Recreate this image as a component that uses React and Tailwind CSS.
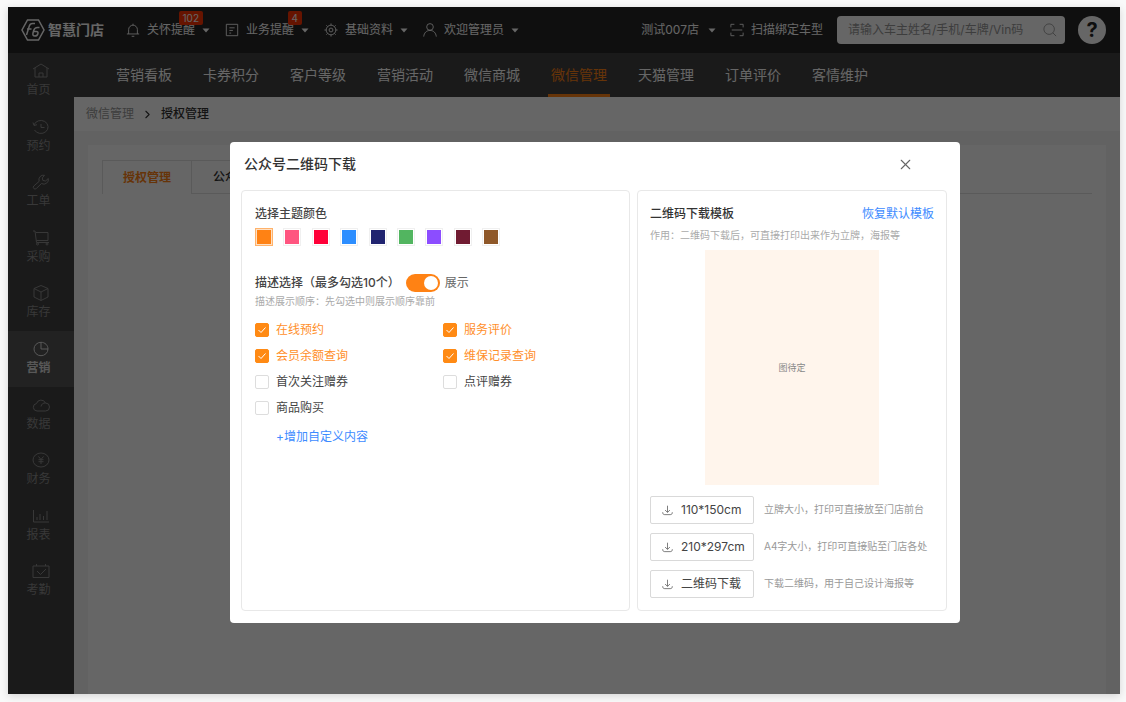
import React, { useState } from 'react';
import { ChevronRight, X } from 'lucide-react';

const ICONS = {
    bell: <><path d="M3 12.500V7.500a5 5 0 0 1 10 0v5M1 12.500h14M8 2.500V.8M6.500 15.200h3" /></>,
    doc: <><path d="M1.500 1.500h13v13h-13zM5 5.500h6M5 8.500h4M5 11.500h2" /></>,
    gear: <><circle cx="8" cy="8" r="5.500" /><circle cx="8" cy="8" r="2.200" /><path d="M8 .5v2M8 13.500v2M.5 8h2M13.500 8h2M2.700 2.700l1.400 1.400M11.900 11.900l1.400 1.400M2.700 13.300l1.400-1.400M11.900 4.100l1.400-1.400" /></>,
    user: <><circle cx="8" cy="4.500" r="3.800" /><path d="M.8 15.500c.5-4.500 3.400-7 7.200-7s6.700 2.500 7.200 7" /></>,
    scan: <><path d="M1 5V1.500h4M11 1.500h4V5M15 11v3.500h-4M5 14.500H1V11M2 8h12" /></>,
    search: <><circle cx="7" cy="7" r="6" /><path d="M11.200 11.200 15 15" /></>,
    download: <><path d="M8 1v9.500M4.500 7.300 8 10.800l3.500-3.500M1 10.500c0 2.500 1 3.500 3 3.500h8c2 0 3-1 3-3.500" /></>,
    home: <><path d="M1 7 9 2l8 5M3 6v9h12V6M7 15v-4h4v4" /></>,
    clock: <><path d="M2 7a7.200 6.500 0 1 1 .5 5M1 4.500 2 7.500l3-.8M9 6v3.500h3.500" /></>,
    wrench: <><path d="M12.500 2.300a4.500 4.500 0 0 0-5.300 6L1.800 13a1.700 1.700 0 0 0 2.500 2.500l5.200-5a4.600 4.600 0 0 0 6.800-5L13.500 8l-2.700-.6-.5-2.500z" /></>,
    cart: <><path d="M1 2h2l1.500 11.500H17M4 3.500h12v8H4.500" /><circle cx="5.500" cy="15" r="1" /><circle cx="15" cy="15" r="1" /></>,
    box: <><path d="M9 1.500 16 4.500v8.500l-7 3.500L2 13V4.500zM2 4.500l7 3.500 7-3.500M9 8v8.500" /></>,
    pie: <><path d="M16 9a7 6.700 0 1 1-7-6.700V9z M9 2.300c4 0 7 3 7 6.700" /></>,
    cloud: <><path d="M5 15a4 3.800 0 0 1-.5-7.500 4.800 4.800 0 0 1 9-.5A4 4 0 0 1 13.500 15zM9 10.500a4 4 0 0 1 4.500-3.500" /></>,
    yuan: <><ellipse cx="9" cy="9" rx="8" ry="7" /><path d="m6.500 5.500 2.500 3 2.500-3M6.500 8.700h5M6.500 10.700h5M9 8.500V13" /></>,
    chart: <><path d="M1.500 3v12H17M5 13v-3M8 13V7M11.500 13V9M15 13V4" /></>,
    calendar: <><path d="M1 4h16v11.500H1zM4.500 2v2M13.500 2v2M5 9l3.500 3.500L14 7" /></>,
};

const Icon = ({ name, size = 16, box = 16 }) => (
    <svg width={size} height={size} viewBox={`0 0 ${box} ${box}`} fill="none" stroke="currentColor" className="shrink-0" aria-hidden="true">
        {ICONS[name]}
    </svg>
);

const Caret = () => (
    <svg width="8" height="5" viewBox="0 0 8 5" className="shrink-0" aria-hidden="true">
        <path d="M.5.5h7L4 4.500z" fill="currentColor" />
    </svg>
);

const topMenu = [
    { icon: 'bell', label: '关怀提醒', badge: '102' },
    { icon: 'doc', label: '业务提醒', badge: '4' },
    { icon: 'gear', label: '基础资料' },
    { icon: 'user', label: '欢迎管理员' },
];

const sideMenu = [
    { icon: 'home', label: '首页' },
    { icon: 'clock', label: '预约' },
    { icon: 'wrench', label: '工单' },
    { icon: 'cart', label: '采购' },
    { icon: 'box', label: '库存' },
    { icon: 'pie', label: '营销' },
    { icon: 'cloud', label: '数据' },
    { icon: 'yuan', label: '财务' },
    { icon: 'chart', label: '报表' },
    { icon: 'calendar', label: '考勤' },
];

const subNav = ['营销看板', '卡券积分', '客户等级', '营销活动', '微信商城', '微信管理', '天猫管理', '订单评价', '客情维护'];

const themes = [
    { name: '橙色', bg: 'bg-[#ff8214]' },
    { name: '粉色', bg: 'bg-[#ff5580]' },
    { name: '红色', bg: 'bg-[#ff0038]' },
    { name: '蓝色', bg: 'bg-[#2d8eff]' },
    { name: '深蓝', bg: 'bg-[#212470]' },
    { name: '绿色', bg: 'bg-[#52b560]' },
    { name: '紫色', bg: 'bg-[#8c4dff]' },
    { name: '酒红', bg: 'bg-[#701b32]' },
    { name: '棕色', bg: 'bg-[#8f5829]' },
];

const options = ['在线预约', '服务评价', '会员余额查询', '维保记录查询', '首次关注赠券', '点评赠券', '商品购买'];

const downloads = [
    { label: '110*150cm', note: '立牌大小，打印可直接放至门店前台' },
    { label: '210*297cm', note: 'A4字大小，打印可直接贴至门店各处' },
    { label: '二维码下载', note: '下载二维码，用于自己设计海报等' },
];

const Header = () => (
    <header className="flex h-[46px] items-center bg-[#272727] pl-[13px] pr-[14px] text-xs text-white">
        <div className="mr-[22px] flex items-center gap-[3px]">
            <svg width="24" height="24" viewBox="0 0 24 24" fill="none" stroke="currentColor" strokeWidth="1.500" aria-hidden="true">
                <path d="M6.500 2h11L23 12l-5.500 10h-11L1 12z" />
                <path d="M14 5.500h-2.500c-1.800 0-2.700.8-3.200 2.500L5.500 17M6 11h4.500M18.500 9.500h-2c-2 0-3.200 1-3.800 3l-.7 2.500c-.5 2 .2 3 1.800 3 1.700 0 2.700-.8 3.100-2.300.4-1.500-.2-2.200-1.700-2.200h-2.500" />
            </svg>
            <span className="text-sm font-bold">智慧门店</span>
        </div>
        <nav className="flex items-center gap-[15px]">
            {topMenu.map(item => (
                <button key={item.label} type="button" className="flex items-center gap-[7px]">
                    <Icon name={item.icon} size={14} />
                    <span className="relative whitespace-nowrap">
                        {item.label}
                        {item.badge && (
                            <span className="absolute -right-2 -top-[11px] rounded-xs bg-[#ff3300] px-1 text-[10px] leading-[14px]">{item.badge}</span>
                        )}
                    </span>
                    <Caret />
                </button>
            ))}
        </nav>
        <div className="ml-auto flex items-center">
            <button type="button" className="mr-[14px] flex items-center gap-[9px] whitespace-nowrap">测试007店 <Caret /></button>
            <button type="button" className="mr-[14px] flex items-center gap-[7px] whitespace-nowrap"><Icon name="scan" size={14} />扫描绑定车型</button>
            <label className="mr-[13px] flex h-7 w-[228px] items-center rounded-sm bg-white pl-[11px] pr-2 text-[#999]">
                <input aria-label="搜索" placeholder="请输入车主姓名/手机/车牌/Vin码" className="min-w-0 flex-1 outline-none placeholder:text-[#999]" />
                <Icon name="search" size={14} />
            </label>
            <button type="button" aria-label="帮助" className="flex size-7 items-center justify-center rounded-full bg-white text-xl font-bold text-[#272727]">?</button>
        </div>
    </header>
);

const Sidebar = () => (
    <aside className="w-[66px] shrink-0 bg-[#424242] text-xs text-[#8c8c8c]">
        <nav className="flex h-[556px] flex-col">
            {sideMenu.map(item => (
                <a key={item.label} href="#" className={`flex flex-1 flex-col items-center pt-[9px] ${item.label === '营销' ? 'bg-[#555] font-bold text-[#ddd]' : ''}`}>
                    <Icon name={item.icon} size={18} box={18} />
                    <span className="pr-[5px] leading-5">{item.label}</span>
                </a>
            ))}
        </nav>
    </aside>
);

const ThemePanel = () => {
    const [theme, setTheme] = useState('橙色');
    const [show, setShow] = useState(true);
    const [checked, setChecked] = useState(options.slice(0, 4));

    const toggle = (name) => {
        setChecked(checked.includes(name) ? checked.filter(c => c !== name) : [...checked, name]);
    };

    return (
        <section className="flex-1 rounded-sm border border-[#e8e8e8] px-[13px] pt-[13px] text-xs text-[#444]">
            <h3 className="font-medium leading-5">选择主题颜色</h3>
            <div className="mt-1 flex w-[245px] justify-between">
                {themes.map(t => (
                    <button
                        key={t.name}
                        type="button"
                        aria-label={t.name}
                        onClick={() => setTheme(t.name)}
                        className={`size-[18px] border p-px ${theme === t.name ? 'border-[#ffb26b] bg-[#ffe0c2]' : 'border-[#f0f0f0]'}`}
                    >
                        <span className={`block size-full ${t.bg}`} />
                    </button>
                ))}
            </div>
            <div className="mt-[27px] flex h-5 items-center gap-1.5">
                <h3 className="font-medium">描述选择（最多勾选10个）</h3>
                <label className="flex items-center gap-[5px] text-[#666]">
                    <input type="checkbox" checked={show} onChange={() => setShow(!show)} className="peer sr-only" />
                    <span className="flex h-[18px] w-[34px] justify-start rounded-full bg-[#ccc] p-[2px] peer-checked:justify-end peer-checked:bg-[#ff8214]">
                        <span className="size-[14px] rounded-full bg-white" />
                    </span>
                    展示
                </label>
            </div>
            <p className="text-[10px] leading-4 text-[#aaa]">描述展示顺序：先勾选中则展示顺序靠前</p>
            <div className="mt-2 grid grid-cols-[188px_1fr]">
                {options.map(name => (
                    <label key={name} className={`flex h-[26px] items-center gap-[7px] ${checked.includes(name) ? 'text-[#ff8f2b]' : ''}`}>
                        <span className="grid size-[14px] place-items-center">
                            <input
                                type="checkbox"
                                checked={checked.includes(name)}
                                onChange={() => toggle(name)}
                                className="col-start-1 row-start-1 size-[14px] appearance-none rounded-xs border border-[#ddd] checked:border-[#ff8a14] checked:bg-[#ff8a14]"
                            />
                            <svg width="10" height="10" viewBox="0 0 10 10" fill="none" stroke="#fff" className="pointer-events-none col-start-1 row-start-1" aria-hidden="true">
                                <path d="M1.500 5 4 7.500 8.500 2.500" />
                            </svg>
                        </span>
                        {name}
                    </label>
                ))}
            </div>
            <button type="button" className="ml-[21px] mt-1.5 leading-5 text-[#3d8bff]">+增加自定义内容</button>
        </section>
    );
};

const TemplatePanel = () => (
    <section className="w-[310px] shrink-0 rounded-sm border border-[#e8e8e8] px-3 pb-3 pt-[13px] text-xs">
        <div className="flex justify-between leading-5">
            <h3 className="font-medium text-[#333]">二维码下载模板</h3>
            <button type="button" className="text-[#3d8bff]">恢复默认模板</button>
        </div>
        <p className="mt-[3px] text-[10px] leading-4 text-[#aaa]">作用：二维码下载后，可直接打印出来作为立牌，海报等</p>
        <div className="mx-auto mt-[7px] flex h-[235px] w-[174px] items-center justify-center bg-[#fff5ec] text-[9px] text-[#888]">图待定</div>
        <ul className="mt-[11px] flex flex-col gap-[9px]">
            {downloads.map(d => (
                <li key={d.label} className="flex items-center gap-[10px]">
                    <button type="button" className="flex h-[28px] w-[104px] shrink-0 items-center gap-2 rounded-xs border border-[#d9d9d9] pl-[11px] text-[#444] [font-feature-settings:'calt'_0]">
                        <Icon name="download" size={11} />{d.label}
                    </button>
                    <span className="whitespace-nowrap text-[10px] text-[#999]">{d.note}</span>
                </li>
            ))}
        </ul>
    </section>
);

const App = () => (
    <div className="flex min-h-screen flex-col bg-[#f9f9f9] pb-2 pl-2 pr-1.5 pt-[7px] font-[family-name:Inter,'Noto_Sans_CJK_SC',sans-serif]">
        <div className="relative flex flex-1 flex-col shadow-[0_2px_8px_rgba(0,0,0,0.15)]">
            <Header />
            <div className="flex flex-1">
                <Sidebar />
                <div className="flex min-w-0 flex-1 flex-col bg-[#f6f6f6]">
                    <nav className="flex h-11 items-stretch gap-[25px] bg-[#424242] pl-[39px] text-sm text-white">
                        {subNav.map(name => (
                            <a key={name} href="#" className={`flex items-center whitespace-nowrap border-y-3 border-transparent px-[3px] ${name === '微信管理' ? 'border-b-[#ff8214] text-[#ff8214]' : ''}`}>{name}</a>
                        ))}
                    </nav>
                    <div className="flex h-[34px] items-center gap-[7px] bg-white pl-3 text-xs text-[#333]">
                        <a href="#" className="text-[#999]">微信管理</a>
                        <ChevronRight size={13} />
                        <span className="font-medium">授权管理</span>
                    </div>
                    <main className="mx-[14px] mt-[14px] flex-1 bg-white px-[14px] pt-[15px]">
                        <div className="flex h-[34px] text-xs font-medium text-[#333]">
                            <button type="button" className="w-[90px] border border-b-0 border-[#e0e0e0] font-bold text-[#ff8214]">授权管理</button>
                            <button type="button" className="border-y border-r border-[#e0e0e0] px-[21px]">公众</button>
                            <div className="flex-1 border-b border-[#e0e0e0]" />
                        </div>
                    </main>
                </div>
            </div>

            <div className="absolute inset-0 flex items-start justify-center bg-black/60 pl-[62px] pt-[135px]">
                <div role="dialog" aria-label="公众号二维码下载" className="w-full max-w-[730px] rounded-sm bg-white pb-3 pl-[11px] pr-[13px]">
                    <div className="flex h-12 items-center justify-between pb-1 pl-[3px] pr-[33px]">
                        <h2 className="text-sm font-medium text-[#333]">公众号二维码下载</h2>
                        <button type="button" aria-label="关闭" className="text-[#666]"><X size={17} strokeWidth={1.5} /></button>
                    </div>
                    <div className="flex gap-[7px]">
                        <ThemePanel />
                        <TemplatePanel />
                    </div>
                </div>
            </div>
        </div>
    </div>
);

export default App;
